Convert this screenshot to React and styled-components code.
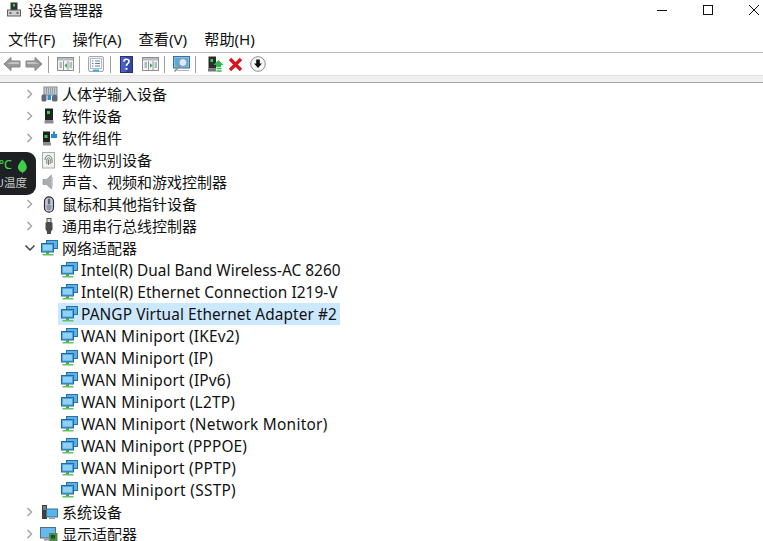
import React from "react";
import styled, { createGlobalStyle } from "styled-components";

const Global = createGlobalStyle`
  html, body { margin: 0; padding: 0; background: #fff; overflow: hidden; }
  #root { width: 763px; height: 541px; overflow: hidden; }
`;
const FONT = `"Noto Sans", "Noto Sans CJK SC", sans-serif`;

const Win = styled.div`
  position: relative; width: 763px; height: 541px; overflow: hidden; background: #fff;
  font-family: ${FONT}; color: #111; display: flex; flex-direction: column;
`;
const TitleBar = styled.div`
  height: 28px; flex: none; display: flex; align-items: center; padding-left: 7px; box-sizing: border-box; padding-bottom: 9px;
`;
const TitleText = styled.span`font-size: 15px; margin-left: 7px; line-height: 20px;`;
const Controls = styled.div`margin-left: auto; display: flex; align-items: center; margin-top: 1px;`;
const Ctl = styled.div`width: 46px; height: 20px; display: flex; align-items: center; justify-content: center; margin-right: ${p => p.$mr || 0}px;`;
const MenuBar = styled.div`
  height: 25px; flex: none; display: flex; align-items: center; padding: 0 0 3px 8px; gap: 17px; box-sizing: border-box;
  border-bottom: 1px solid #b9bcc4;
`;
const Menu = styled.span`font-size: 15.2px; line-height: 20px; color: #111;`;
const Toolbar = styled.div`
  height: 22px; flex: none; display: flex; align-items: center; padding-left: 3px; box-sizing: border-box;
`;
const Tool = styled.div`display: flex; width: ${p => p.$w || 22}px; margin-left: ${p => p.$ml || 0}px; justify-content: center; align-items: center; flex: none;`;
const Sep = styled.div`width: 1px; height: 17px; background: #a0a0a0; flex: none; margin: 0 ${p => p.$r || 7}px 0 ${p => p.$l || 7}px;`;
const Strip = styled.div`height: 8px; flex: none; background: #f0f0f0; border-top: 1px solid #e3e3e3; border-bottom: 1px solid #a6a6a6; box-sizing: border-box;`;
const Tree = styled.div`flex: 1; overflow: hidden;`;
const Row = styled.div`
  height: 22px; display: flex; align-items: center; position: relative; padding-left: ${p => (p.$child ? 60 : 22)}px;
`;
const Chev = styled.div`width: 16px; height: 22px; flex: none; margin-right: 2px; display: flex; align-items: center; justify-content: center;`;
const IconBox = styled.div`width: 18px; height: 18px; flex: none; display: flex; align-items: center; justify-content: center; margin-right: ${p => (p.$child ? 3 : 4)}px;`;
const Label = styled.span`
  font-size: ${p => (p.$latin ? 15.4 : 15)}px; line-height: 22px; white-space: nowrap; color: #111;
  letter-spacing: ${p => p.$track || 0}px; padding-top: ${p => (p.$latin ? 2 : 0)}px;
`;
const ChildWrap = styled.div`
  display: flex; align-items: center; height: 22px; background: ${p => (p.$sel ? "#cce8ff" : "transparent")};
  margin-left: -2px; padding-left: 2px; padding-right: 3px;
`;
const Widget = styled.div`
  position: absolute; left: -14px; top: 152px; width: 50px; height: 43px; background: #1f2023; border-radius: 9px; overflow: hidden;
  box-sizing: border-box; color: #fff;
`;
const WTemp = styled.div`position: absolute; left: 0; top: 6px; width: 26px; text-align: right; font-size: 12.5px; line-height: 14px; color: #3fe04a;`;
const WLeaf = styled.div`position: absolute; left: 31px; top: 5px;`;
const WText = styled.div`position: absolute; right: 9px; top: 23px; font-size: 11.5px; line-height: 15px; color: #c8c8c8; white-space: nowrap;`;

const Svg = ({ w = 16, h = 16, children }) => <svg width={w} height={h} viewBox={`0 0 ${w} ${h}`}>{children}</svg>;

const ChevRight = () => <Svg w={10} h={12}><path d="M2.5 2 L6.5 6 L2.5 10" fill="none" stroke="#a6a6a6" strokeWidth="1.5" /></Svg>;
const ChevDown = () => <Svg w={12} h={10}><path d="M1.5 2.5 L6 7 L10.5 2.5" fill="none" stroke="#404040" strokeWidth="1.5" /></Svg>;

const Net = () => (
  <Svg w={17} h={16}>
    <rect x="5.5" y="0.5" width="11" height="8" fill="#5fb0e4" stroke="#2a6fa8" />
    <rect x="0.5" y="3.5" width="12" height="8.5" fill="#4ea6e2" stroke="#1e6aa6" />
    <rect x="2" y="5" width="9" height="5.5" fill="#8fd0f5" />
    <rect x="5" y="12" width="3" height="2" fill="#4aa84a" />
    <rect x="1.5" y="14" width="11" height="1.5" fill="#63c063" />
  </Svg>
);
const Keyboard = () => (
  <Svg w={17} h={16}>
    <rect x="3" y="1" width="13" height="8" fill="#c4c9d0" stroke="#7e8790" />
    <path d="M5 3h9M5 5h9M5 7h9" stroke="#6d757d" strokeDasharray="1 1" />
    <rect x="0.5" y="8.5" width="5" height="7" rx="1.5" fill="#5f6a76" />
    <rect x="11" y="9" width="5.5" height="6.5" rx="1.5" fill="#5f6a76" />
    <rect x="6.5" y="9" width="3.5" height="5" fill="#2f8fd8" />
  </Svg>
);
const Device = () => (
  <Svg w={16} h={16}>
    <rect x="4" y="0.5" width="8" height="12" fill="#222" />
    <rect x="6" y="3" width="3" height="3" fill="#2fd04a" />
    <rect x="3.5" y="12.5" width="9" height="3" fill="#8c8c8c" />
  </Svg>
);
const Component = () => (
  <Svg w={16} h={16}>
    <rect x="2" y="1.5" width="7" height="11" fill="#222" />
    <rect x="3.5" y="5" width="3" height="3" fill="#2fd04a" />
    <rect x="2" y="12.5" width="8" height="3" fill="#8c8c8c" />
    <path d="M10 4h2V1.5h2V4h2v4h-6z" fill="#2a86d8" />
  </Svg>
);
const Finger = () => (
  <Svg w={16} h={17}>
    <rect x="1.5" y="0.5" width="12" height="15.5" fill="#eef3ee" stroke="#9db5a8" />
    <path d="M4 8c0-6 7-6 7 0v3M5.8 12V8c0-3 3.4-3 3.4 0v4M7.5 7.5V13" fill="none" stroke="#6b6b6b" strokeWidth="0.9" />
  </Svg>
);
const Speaker = () => (
  <Svg w={16} h={16}>
    <path d="M2 5.5h3.5L10.5 1v14L5.5 10.5H2z" fill="#a9adb0" stroke="#8a8e92" strokeWidth="0.6" />
    <rect x="10.5" y="3" width="1.5" height="10" fill="#ccd0d3" />
  </Svg>
);
const Mouse = () => (
  <Svg w={14} h={17}>
    <rect x="2.5" y="0.8" width="9" height="15.4" rx="4.5" fill="#c3c9d6" stroke="#2b2f38" strokeWidth="1.2" />
    <rect x="5.8" y="2.5" width="2.4" height="6" rx="1.2" fill="#5e6672" />
    <path d="M4.5 12a2.5 2.5 0 0 0 5 0v-3h-5z" fill="#8e98aa" />
  </Svg>
);
const Usb = () => (
  <Svg w={14} h={17}>
    <rect x="5" y="0.5" width="4" height="4" fill="#dcdcdc" stroke="#555" />
    <path d="M3.5 4.5h7v7l-1.5 2v2.5h-4V13.5l-1.5-2z" fill="#4a4a4a" />
  </Svg>
);
const SysIcon = () => (
  <Svg w={17} h={16}>
    <rect x="1" y="1" width="5" height="14" fill="#3e3e3e" />
    <path d="M2 3h3M2 5h3" stroke="#bbb" />
    <rect x="5.5" y="5" width="11" height="8" fill="#59b4ec" stroke="#2a76ad" />
    <rect x="8" y="13" width="6" height="2" fill="#a5a5a5" />
  </Svg>
);
const Display = () => (
  <Svg w={18} h={16}>
    <rect x="0.5" y="1.5" width="15" height="10.5" fill="#66bbee" stroke="#5c6c78" />
    <rect x="9" y="7" width="8.5" height="8" fill="#4d8b4d" />
    <rect x="11" y="9" width="4" height="3.5" fill="#244a24" />
    <rect x="4" y="12.5" width="6" height="2" fill="#9a9a9a" />
  </Svg>
);
const DevMgr = () => (
  <Svg w={14} h={15}>
    <rect x="3.5" y="0.5" width="7" height="8" fill="#333" />
    <rect x="6" y="2" width="2" height="2.5" fill="#3ed45a" />
    <rect x="0.5" y="8" width="13" height="6" fill="#d0d0d0" stroke="#5e5e5e" />
    <path d="M2.5 11h2M9.5 11h2" stroke="#444" strokeWidth="1.5" />
  </Svg>
);

const Arrow = ({ flip }) => (
  <Svg w={18} h={16}>
    <g transform={flip ? "translate(18 0) scale(-1 1)" : undefined}>
      <path d="M1 8 L8 1.5 V5 H17 V11 H8 V14.5 Z" fill="#999" stroke="#858585" />
      <path d="M8 6 H16 V8 H4 Z" fill="#c4c4c4" />
    </g>
  </Svg>
);
const PaneL = ({ right }) => (
  <Svg w={17} h={14}>
    <rect x="0.5" y="0.5" width="16" height="13" fill="#f3f3f3" stroke="#8c8f94" />
    <rect x="1" y="1" width="15" height="2.5" fill="#b6bcc4" />
    <path d="M6.5 4v9M11 4v9" stroke="#9a9a9a" />
    <path d="M2.5 6h2.5M2.5 8h2.5M2.5 10h2.5M12.5 6h2.5M12.5 8h2.5M12.5 10h2.5" stroke="#77808a" />
    {right
      ? <path d="M8 6v5l2.5-2.5z" fill="#2cb84a" />
      : <path d="M10 6v5L7.5 8.5z" fill="#2cb84a" />}
  </Svg>
);
const Props = () => (
  <Svg w={16} h={17}>
    <rect x="0.5" y="0.5" width="15" height="15" rx="1.5" fill="#f0f2f5" stroke="#a4a8ad" />
    <rect x="2.5" y="2.5" width="11" height="10" fill="#fff" stroke="#b9bdc2" />
    <path d="M4 5h1.5M7 5h5M4 7.5h1.5M7 7.5h5M4 10h1.5M7 10h5" stroke="#5d80a8" />
    <rect x="5" y="13.5" width="6" height="2" fill="#35b0ec" />
  </Svg>
);
const Help = () => (
  <svg width="13" height="17" viewBox="0 0 13 17">
    <rect x="0.5" y="0.5" width="12" height="16" fill="#3144a8" stroke="#26317c" />
    <rect x="1" y="1" width="5" height="15" fill="#4a5fc8" />
    <path d="M4 5.5c0-3 5-3 5 0 0 2-2.5 2-2.5 4.5" fill="none" stroke="#fff" strokeWidth="1.7" />
    <rect x="5.6" y="11.8" width="1.9" height="2" fill="#fff" />
  </svg>
);
const Scan = () => (
  <Svg w={17} h={17}>
    <rect x="0.5" y="0.5" width="16" height="11.5" fill="#7fc4ee" stroke="#3d6f96" />
    <rect x="2" y="2" width="13" height="8.5" fill="#5ba9dc" />
    <circle cx="10" cy="6.5" r="4" fill="#d8ecf8" stroke="#8a99a4" />
    <path d="M7 9.5L1.5 15.5" stroke="#8a8a8a" strokeWidth="1.6" />
    <path d="M4 14.5h12" stroke="#b5b5b5" />
  </Svg>
);
const Update = () => (
  <Svg w={17} h={17}>
    <rect x="1.5" y="0.5" width="7.5" height="12" fill="#2c2c2c" />
    <rect x="3.5" y="3" width="2.5" height="3" fill="#36d455" />
    <rect x="1" y="12.5" width="8" height="3" fill="#787878" />
    <path d="M11.5 4 L16.5 9 H14 V11 H9 V9 H6.5 Z" fill="#2db84c" />
    <path d="M9.5 12.5h5M9.5 15h5" stroke="#2db84c" strokeWidth="1.3" />
  </Svg>
);
const RedX = () => (
  <Svg w={15} h={15}>
    <path d="M2 2 L13 13 M13 2 L2 13" stroke="#d8141c" strokeWidth="3.2" />
  </Svg>
);
const Down = () => (
  <Svg w={16} h={16}>
    <circle cx="8" cy="8" r="7.3" fill="#fafafa" stroke="#8c8c8c" />
    <path d="M6.2 3.5h3.6v4H12L8 12 4 7.5h2.2z" fill="#111" />
  </Svg>
);
const Leaf = () => (
  <Svg w={11} h={15}>
    <path d="M5.5 0.5C9 4 10.5 7 9.5 10 8.8 12 7 13 6 13.2L5.5 15 5 13.2C3.5 13 1.5 11.5 1 9.2 .5 6.5 3 3 5.5 0.5z" fill="#3fd04a" />
  </Svg>
);

const before = [
  ["人体学输入设备", Keyboard], ["软件设备", Device], ["软件组件", Component],
  ["生物识别设备", Finger], ["声音、视频和游戏控制器", Speaker],
  ["鼠标和其他指针设备", Mouse], ["通用串行总线控制器", Usb],
];
const kids = [
  ["Intel(R) Dual Band Wireless-AC 8260", 0.03], ["Intel(R) Ethernet Connection I219-V", 0.06],
  ["PANGP Virtual Ethernet Adapter #2", 0.09], ["WAN Miniport (IKEv2)", 0.2], ["WAN Miniport (IP)", 0.18],
  ["WAN Miniport (IPv6)", 0.21], ["WAN Miniport (L2TP)", 0.26], ["WAN Miniport (Network Monitor)", 0.27],
  ["WAN Miniport (PPPOE)", 0.15], ["WAN Miniport (PPTP)", 0.21], ["WAN Miniport (SSTP)", 0.3],
];
const Cat = ({ label, Icon, open }) => (
  <Row>
    <Chev>{open ? <ChevDown /> : <ChevRight />}</Chev>
    <IconBox><Icon /></IconBox>
    <Label>{label}</Label>
  </Row>
);

export default function App() {
  return (
    <Win>
      <Global />
      <TitleBar>
        <DevMgr />
        <TitleText>设备管理器</TitleText>
        <Controls>
          <Ctl>
            <Svg w={12} h={12}><path d="M1 6.5h10" stroke="#111" /></Svg>
          </Ctl>
          <Ctl>
            <Svg w={12} h={12}><rect x="1.5" y="1.5" width="9" height="9" fill="none" stroke="#111" /></Svg>
          </Ctl>
          <Ctl $mr={-14}>
            <Svg w={12} h={12}><path d="M1 1L11 11M11 1L1 11" stroke="#111" fill="none" /></Svg>
          </Ctl>
        </Controls>
      </TitleBar>
      <MenuBar>
        <Menu>文件(F)</Menu><Menu>操作(A)</Menu><Menu>查看(V)</Menu><Menu>帮助(H)</Menu>
      </MenuBar>
      <Toolbar>
        <Tool $w={18}><Arrow /></Tool>
        <Tool $w={26}><Arrow flip /></Tool>
        <Sep $l={1} $r={8} />
        <Tool $w={17}><PaneL /></Tool>
        <Sep $l={5} $r={8} />
        <Tool $w={16}><Props /></Tool>
        <Sep $l={6} $r={9} />
        <Tool $w={13}><Help /></Tool>
        <Tool $w={17} $ml={9}><PaneL right /></Tool>
        <Sep $l={5} $r={8} />
        <Tool $w={17}><Scan /></Tool>
        <Sep $l={5} $r={11} />
        <Tool $w={17}><Update /></Tool>
        <Tool $w={22}><RedX /></Tool>
        <Tool $w={24}><Down /></Tool>
      </Toolbar>
      <Strip />
      <Tree>
        {before.map(([l, I]) => <Cat key={l} label={l} Icon={I} />)}
        <Cat label="网络适配器" Icon={Net} open />
        {kids.map(([k, track], i) => (
          <Row key={k} $child>
            <ChildWrap $sel={i === 2}>
              <IconBox $child><Net /></IconBox>
              <Label $latin $track={track}>{k}</Label>
            </ChildWrap>
          </Row>
        ))}
        <Cat label="系统设备" Icon={SysIcon} />
        <Cat label="显示适配器" Icon={Display} />
      </Tree>
      <Widget>
        <WTemp>°C</WTemp>
        <WLeaf><Leaf /></WLeaf>
        <WText>U温度</WText>
      </Widget>
    </Win>
  );
}
